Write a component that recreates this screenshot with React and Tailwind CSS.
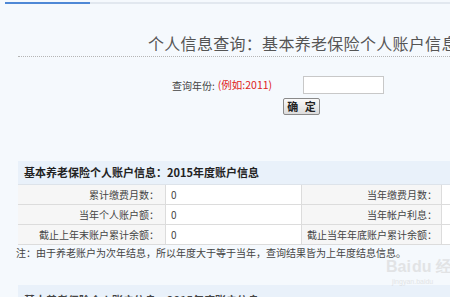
import React from "react";

const cjk = "font-['Noto_Sans_CJK_SC',sans-serif]";

const rows = [
  ["累计缴费月数：", "0", "当年缴费月数："],
  ["当年个人账户额：", "0", "当年帐户利息："],
  ["截止上年末账户累计余额：", "0", "截止当年年底账户累计余额："],
];

export default function App() {
  return (
    <div className={`relative w-[450px] h-[297px] overflow-hidden bg-[#f5f9fd] ${cjk}`}>
      {/* top tab line */}
      <div className="flex pt-[2px]">
        <div className="ml-[5px] w-[85px] h-[2px] bg-[#4f88d6]" />
        <div className="flex-1 h-[2px] bg-[#e2e8ef]" />
      </div>

      {/* title */}
      <div className="mt-[29px] pl-[148px] whitespace-nowrap text-[16px] leading-[20px] tracking-[0.3px] text-[#555]">
        个人信息查询：基本养老保险个人账户信息
      </div>
      <div className="mt-[3px] ml-[18px] border-t border-dotted border-[#b5b5b5]" />

      {/* query form */}
      <div className="mt-[19px] flex items-center h-[18px] pl-[172px] whitespace-nowrap">
        <div className="w-[131px] flex items-center">
          <span className="text-[10px] text-[#444]">查询年份:</span>
          <span className="ml-[3px] text-[10.5px] text-[#e02020]">(例如:2011)</span>
        </div>
        <input
          className="w-[81px] h-[18px] bg-white border border-[#c8c8c8] outline-none"
          defaultValue=""
        />
      </div>
      <button className="mt-[4px] ml-[283px] w-[37px] h-[17px] flex items-center justify-center text-[11px] font-bold text-[#222] border border-[#8a8a8a] rounded-[2px] bg-gradient-to-b from-[#fafafa] to-[#dcdcdc] tracking-[2px] pl-[2px]">
        确 定
      </button>

      {/* account table */}
      <div className="mt-[46px] ml-[18px] w-[560px]">
        <div className="h-[24px] flex items-center pl-[6px] bg-[#e9f1fa] border-b border-[#dde3ea] text-[11px] font-bold text-[#222] whitespace-nowrap">
          基本养老保险个人账户信息：2015年度账户信息
        </div>
        {rows.map((r, i) => (
          <div key={i} className="flex h-[20px] border-b border-[#dcdcdc] text-[10px] text-[#444] whitespace-nowrap">
            <div className="w-[148px] bg-[#f6f6f6] flex items-center justify-end pr-[6px] border-r border-[#dcdcdc]">{r[0]}</div>
            <div className="w-[136px] bg-white flex items-center pl-[5px] border-r border-[#dcdcdc]">{r[1]}</div>
            <div className="w-[140px] bg-[#f6f6f6] flex items-center justify-end pr-[4px] border-r border-[#dcdcdc]">{r[2]}</div>
            <div className="flex-1 bg-white" />
          </div>
        ))}
      </div>

      <div className="mt-[1px] pl-[16px] text-[10px] leading-[14px] text-[#444] whitespace-nowrap">
        注：由于养老账户为次年结息，所以年度大于等于当年，查询结果皆为上年度结息信息。
      </div>

      <div className="mt-[25px] ml-[18px] h-[24px] bg-[#e9f1fa] pl-[6px] pt-[7px] text-[11px] font-bold text-[#444] whitespace-nowrap">
        基本养老保险个人账户信息：2015年度账户信息
      </div>

      {/* watermark */}
      <div className="absolute left-[386px] top-[259px] text-[#d6d6d6] opacity-60 leading-none whitespace-nowrap select-none font-['Liberation_Sans',sans-serif]">
        <div className="text-[16px] font-bold">Bai<span className="ml-[1px]">du</span> 经</div>
        <div className="mt-[3px] ml-[6px] text-[7px]">jingyan.baidu</div>
      </div>
    </div>
  );
}
